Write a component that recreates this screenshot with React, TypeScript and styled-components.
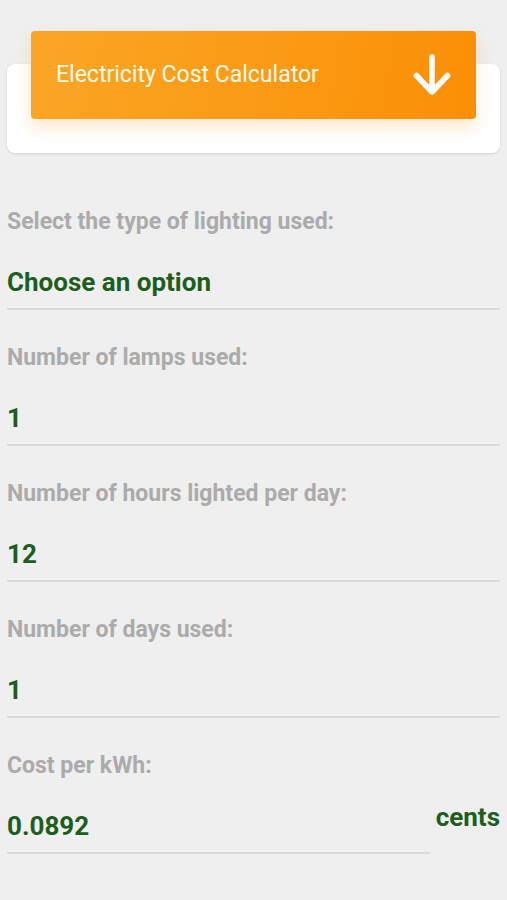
import styled, { createGlobalStyle } from "styled-components";

const Global = createGlobalStyle`
  body {
    margin: 0;
    background: #efefef;
    font-family: Roboto, "Liberation Sans", sans-serif;
  }
`;

const Page = styled.div`
  padding: 64px 7px 0 7px;
  min-height: 900px;
  box-sizing: border-box;
`;

const Card = styled.div`
  height: 89px;
  background: #ffffff;
  border-radius: 8px;
  box-shadow: 0 1px 3px rgba(0, 0, 0, 0.12);
  display: flow-root;
`;

const Header = styled.div`
  margin: -33px 24px 0 24px;
  height: 88px;
  border-radius: 4px;
  background: linear-gradient(100deg, #fba626 0%, #fb9b16 50%, #fb8f06 100%);
  box-shadow: 0 8px 16px rgba(240, 150, 20, 0.22);
  display: flex;
  align-items: center;
  justify-content: space-between;
  padding: 0 25px 0 25px;
`;

const Title = styled.span`
  color: #fffbea;
  font-size: 23px;
  font-weight: 400;
  margin-top: -2px;
`;

const Form = styled.div`
  display: flex;
  flex-direction: column;
  margin-top: 55px;
`;

const Field = styled.div`
  display: flex;
  align-items: flex-start;
  height: 136px;
`;

const FieldMain = styled.div`
  flex: 1;
  display: flex;
  flex-direction: column;
`;

const Label = styled.div`
  color: #ababab;
  font-size: 23px;
  font-weight: 700;
  line-height: 28px;
`;

const Value = styled.div`
  color: #1d5e20;
  font-size: 26px;
  font-weight: 700;
  line-height: 30px;
  margin-top: 31px;
  padding-bottom: 11px;
  border-bottom: 2px solid #dcdcdc;
`;

const Unit = styled.div`
  color: #1d5e20;
  font-size: 26px;
  font-weight: 700;
  line-height: 30px;
  padding-top: 50px;
  margin-left: 6px;
`;

const ArrowDown = () => (
  <svg width="38" height="44" viewBox="0 0 38 44" fill="none">
    <path
      d="M19 4 V39 M3.5 22.5 L19 39 L34.5 22.5"
      stroke="#ffffff"
      strokeWidth="5.5"
      strokeLinecap="round"
      strokeLinejoin="round"
    />
  </svg>
);

const fields = [
  { label: "Select the type of lighting used:", value: "Choose an option" },
  { label: "Number of lamps used:", value: "1" },
  { label: "Number of hours lighted per day:", value: "12" },
  { label: "Number of days used:", value: "1" },
];

export default function App() {
  return (
    <>
      <Global />
      <Page>
        <Card>
          <Header>
            <Title>Electricity Cost Calculator</Title>
            <ArrowDown />
          </Header>
        </Card>
        <Form>
          {fields.map((f) => (
            <Field key={f.label}>
              <FieldMain>
                <Label>{f.label}</Label>
                <Value>{f.value}</Value>
              </FieldMain>
            </Field>
          ))}
          <Field>
            <FieldMain>
              <Label>Cost per kWh:</Label>
              <Value>0.0892</Value>
            </FieldMain>
            <Unit>cents</Unit>
          </Field>
        </Form>
      </Page>
    </>
  );
}
